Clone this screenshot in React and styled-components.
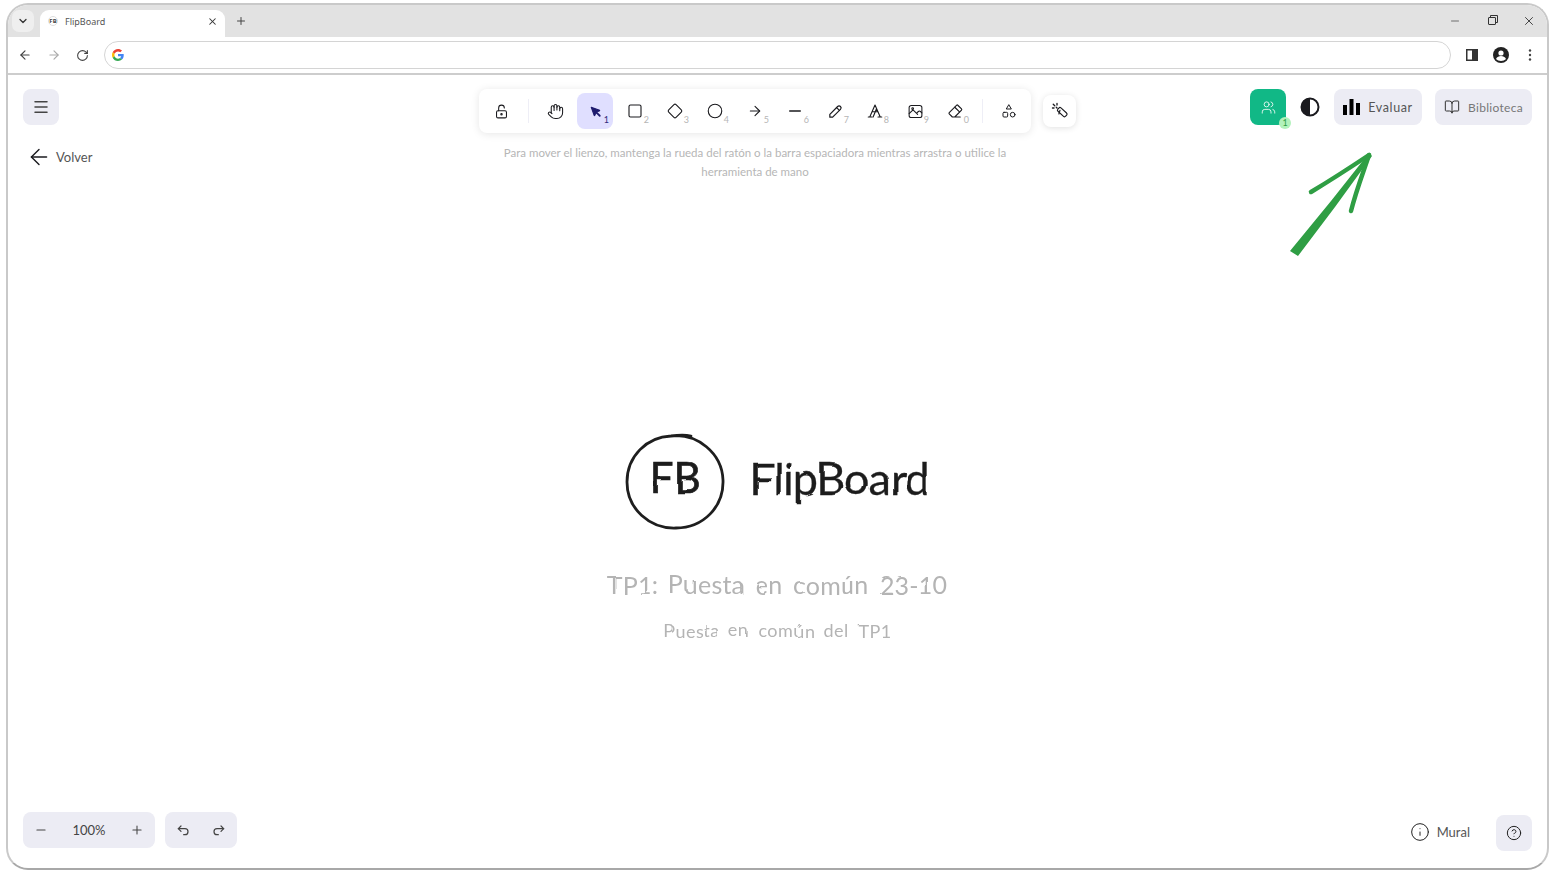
import React from 'react';
import styled, { createGlobalStyle } from 'styled-components';
import {
  ArrowLeft, ArrowRight, BookOpen, ChevronDown, CircleHelp, Hand, Info, Menu,
  Minus, Plus, RotateCw, Users, X,
} from 'lucide-react';

const GlobalStyle = createGlobalStyle`
  html, body {
    margin: 0;
    height: 100%;
    background: #fff;
    overflow: hidden;
  }
  body {
    font-family: "Lato", "Noto Sans", "Liberation Sans", sans-serif;
  }
`;

const Window = styled.div`
  box-sizing: border-box;
  width: 1543px;
  height: 867px;
  margin: 3px 6px 6px 6px;
  border: 2px solid #c9c9c9;
  border-bottom-color: #a8a8a8;
  border-radius: 22px;
  overflow: hidden;
  display: flex;
  flex-direction: column;
  background: #fff;
`;

const TabStrip = styled.div`
  height: 32px;
  flex: none;
  background: #e2e2e2;
  display: flex;
  align-items: flex-end;
  padding-left: 4px;
`;

const TabSearch = styled.div`
  width: 22px;
  height: 22px;
  margin-bottom: 5px;
  border-radius: 7px;
  background: #efefef;
  color: #333;
  display: flex;
  align-items: center;
  justify-content: center;
`;

const Tab = styled.div`
  width: 185px;
  height: 27px;
  margin-left: 6px;
  box-sizing: border-box;
  padding: 0 7px 5px 8px;
  background: #fff;
  border-radius: 9px 9px 0 0;
  display: flex;
  align-items: center;
  gap: 7px;
  font-family: "Noto Sans", sans-serif;
  font-size: 9px;
  color: #555;
`;

const Favicon = styled.span`
  width: 10px;
  height: 10px;
  border: 1px solid #ddd;
  border-radius: 50%;
  box-sizing: border-box;
  font-size: 6px;
  font-weight: 700;
  color: #444;
  display: flex;
  align-items: center;
  justify-content: center;
`;

const TabTitle = styled.span`
  flex: 1;
`;

const NewTab = styled.div`
  margin: 0 0 10px 10px;
  color: #444;
  display: flex;
`;

const WindowControls = styled.div`
  margin-left: auto;
  height: 32px;
  padding: 0 0 1px;
  box-sizing: border-box;
  display: flex;
  align-items: center;
  color: #222;
`;

const WindowControl = styled.span`
  width: 37px;
  display: flex;
  justify-content: center;
`;

const RestoreIcon = styled.span`
  width: 6px;
  height: 6px;
  border: 1px solid #333;
  border-radius: 1px;
  box-shadow: 2px -2px 0 -1px #e2e2e2, 2px -2px 0 0 #333;
`;

const AddressBar = styled.div`
  height: 38px;
  flex: none;
  box-sizing: border-box;
  border-bottom: 2px solid #cdcdcd;
  display: flex;
  align-items: center;
  padding: 0 3px 0 2px;
  color: #444;
`;

const NavIcon = styled.span`
  width: 29px;
  display: flex;
  justify-content: center;
  color: ${(p) => (p.$dim ? '#aaa' : '#444')};
`;

const Omnibox = styled.div`
  flex: 1;
  height: 28px;
  margin: 0 6px 0 7px;
  box-sizing: border-box;
  padding-left: 7px;
  border: 1px solid #d4d4d4;
  border-radius: 14px;
  display: flex;
  align-items: center;
`;

const Canvas = styled.main`
  flex: 1;
  position: relative;
  display: flex;
  flex-direction: column;
  padding: 14px 15px 17px 15px;
  color: #1b1b1f;
`;

const TopBar = styled.div`
  display: grid;
  grid-template-columns: 456px auto 1fr;
  align-items: start;
`;

const LeftColumn = styled.div`
  display: flex;
  flex-direction: column;
  align-items: flex-start;
`;

const IconButton = styled.button`
  width: 36px;
  height: 36px;
  padding: 0;
  border: 0;
  border-radius: 8px;
  background: #ececf4;
  color: #444;
  display: flex;
  align-items: center;
  justify-content: center;
`;

const BackLink = styled.a`
  margin: 19px 0 0 3px;
  display: flex;
  align-items: center;
  gap: 4px;
  font-size: 13px;
  color: #555;
`;

const CenterColumn = styled.div`
  width: 597px;
`;

const ToolRow = styled.div`
  display: flex;
  align-items: center;
  gap: 12px;
`;

const Toolbar = styled.div`
  height: 44px;
  width: 552px;
  box-sizing: border-box;
  padding: 4px;
  display: flex;
  align-items: center;
  gap: 4px;
  background: #fff;
  border-radius: 8px;
  box-shadow: 0 1px 8px rgba(0, 0, 0, 0.1);
`;

const Tool = styled.div`
  position: relative;
  width: 36px;
  height: 36px;
  flex: none;
  border-radius: 8px;
  background: ${(p) => (p.$active ? '#e0dfff' : 'transparent')};
  color: #1b1b1f;
  display: flex;
  align-items: center;
  justify-content: center;
`;

const ToolKey = styled.span`
  position: absolute;
  right: 4px;
  bottom: 4px;
  font-size: 9px;
  line-height: 10px;
  color: ${(p) => (p.$active ? '#2f2a7a' : '#b5b5b5')};
`;

const ToolDivider = styled.div`
  width: 1px;
  height: 24px;
  margin: 0 4px 0 5px;
  background: #eeeef6;
`;

const MagicButton = styled.div`
  width: 33px;
  height: 32px;
  border-radius: 8px;
  background: #fff;
  box-shadow: 0 1px 6px rgba(0, 0, 0, 0.12);
  display: flex;
  align-items: center;
  justify-content: center;
`;

const Hint = styled.p`
  width: 552px;
  margin: 11px 0 0;
  font-size: 11.5px;
  line-height: 18.5px;
  text-align: center;
  color: #b6b6b6;
`;

const RightGroup = styled.div`
  display: flex;
  justify-content: flex-end;
  align-items: center;
`;

const CollabButton = styled.div`
  position: relative;
  width: 36px;
  height: 36px;
  border-radius: 8px;
  background: #11b886;
  color: #fff;
  display: flex;
  align-items: center;
  justify-content: center;
`;

const CollabBadge = styled.span`
  position: absolute;
  right: -5px;
  bottom: -4px;
  width: 12px;
  height: 12px;
  border-radius: 50%;
  background: #b2f2bb;
  color: #2f9e44;
  font-size: 9px;
  line-height: 12px;
  text-align: center;
`;

const ThemeToggle = styled.div`
  margin: 0 14px;
  display: flex;
`;

const LabelButton = styled.div`
  height: 36px;
  width: ${(p) => p.$width}px;
  margin-left: ${(p) => p.$gap || 0}px;
  box-sizing: border-box;
  border-radius: 8px;
  background: #ececf4;
  display: flex;
  align-items: center;
  justify-content: center;
  gap: ${(p) => p.$iconGap}px;
  font-size: ${(p) => p.$size}px;
  letter-spacing: ${(p) => p.$spacing}px;
  color: ${(p) => p.$color};
`;

const BottomBar = styled.div`
  margin-top: auto;
  display: flex;
  align-items: flex-end;
`;

const ControlGroup = styled.div`
  height: 36px;
  width: ${(p) => p.$width}px;
  margin: 0 10px 3px 0;
  border-radius: 8px;
  background: #ececf4;
  display: flex;
  align-items: center;
  justify-content: space-between;
  padding: 0 ${(p) => p.$pad}px;
  box-sizing: border-box;
  color: #444;
  font-size: 13px;
`;

const MuralInfo = styled.div`
  margin: 0 26px 9px auto;
  display: flex;
  align-items: center;
  gap: 7px;
  font-size: 13px;
  color: #555;
`;

// lo dibujado en el mural
const Scene = styled.div`
  position: absolute;
  top: 358px;
  left: 0;
  right: 1px;
  display: flex;
  flex-direction: column;
  align-items: center;
  pointer-events: none;
`;

const LogoRow = styled.div`
  display: flex;
  align-items: center;
  gap: 24px;
`;

const LogoMark = styled.div`
  position: relative;
  width: 100px;
  height: 97px;
`;

const LogoInitials = styled.span`
  position: absolute;
  inset: 0;
  padding-bottom: 10px;
  display: flex;
  align-items: center;
  justify-content: center;
  font-size: 42px;
  -webkit-text-stroke: 0.7px #1e1e1e;
  color: #1e1e1e;
  filter: url(#rough);
`;

const LogoName = styled.span`
  font-size: 45px;
  line-height: 60px;
  margin-bottom: 7px;
  letter-spacing: -1px;
  -webkit-text-stroke: 0.3px #1e1e1e;
  color: #1e1e1e;
  filter: url(#rough);
`;

const SceneTitle = styled.div`
  font-size: ${(p) => p.$size}px;
  line-height: 30px;
  margin-top: ${(p) => p.$top}px;
  letter-spacing: ${(p) => p.$spacing}px;
  word-spacing: 4px;
  color: #b4b4b4;
  filter: url(#rough);
`;

const GreenArrow = styled.svg`
  position: absolute;
  left: 1273px;
  top: 70px;
`;

const line = { fill: 'none', stroke: 'currentColor', strokeLinecap: 'round', strokeLinejoin: 'round' };

const Glyph = ({ size = 16, w = 1.5, children }) => (
  <svg width={size} height={size} viewBox="0 0 24 24" strokeWidth={w} style={line}>{children}</svg>
);

const tools = [
  { key: '1', active: true, icon: (
    <Glyph size={17} w={1.5}>
      <path d="M6 6l4.200 11.800a.4.4 0 0 0 .7 0l2.100-4.800 4.800-2a.4.4 0 0 0 0-.6z" fill="#1e1b6e" stroke="#1e1b6e" />
      <path d="M13.500 13.500l4.500 4.500" stroke="#1e1b6e" strokeWidth={2.500} />
    </Glyph>
  ) },
  { key: '2', icon: <Glyph size={18}><rect x="4" y="4" width="16" height="16" rx="2" /></Glyph> },
  { key: '3', icon: <Glyph size={18}><path d="M10.600 3.600a2 2 0 0 1 2.800 0l7 7a2 2 0 0 1 0 2.800l-7 7a2 2 0 0 1-2.800 0l-7-7a2 2 0 0 1 0-2.800z" /></Glyph> },
  { key: '4', icon: <Glyph size={18}><circle cx="12" cy="12" r="9" /></Glyph> },
  { key: '5', icon: <ArrowRight size={16} strokeWidth={1.600} /> },
  { key: '6', icon: <Glyph size={16}><path d="M4 12h16" strokeWidth={2} /></Glyph> },
  { key: '7', icon: <Glyph size={17} w={1.700}><path d="M4 20h4L19 9a2.800 2.800 0 0 0-4-4L4 16z" /><path d="M13.500 6.500l4 4" /></Glyph> },
  { key: '8', icon: <Glyph size={18}><path d="M3 20h5M16 20h5M5 20L12 4l7 16M8 13h8M9.500 20L14 9" /></Glyph> },
  { key: '9', icon: <Glyph size={17}><rect x="3" y="3.500" width="18" height="17" rx="3" /><circle cx="8" cy="8" r="1.200" /><path d="M3 15l4-4c1-1 2-1 3 0l5 5M14 14l2-2c1-1 2-1 3 0l2 2" /></Glyph> },
  { key: '0', icon: <Glyph size={18}><path d="M19 20H8.500l-4.200-4.300a1 1 0 0 1 0-1.400l10-10a1 1 0 0 1 1.400 0l5 5a1 1 0 0 1 0 1.400l-9 9.300" /><path d="M18 13.300L11.700 7" /></Glyph> },
];

function GoogleIcon() {
  return (
    <svg width="12" height="12" viewBox="0 0 48 48">
      <path fill="#EA4335" d="M24 9.500c3.500 0 6.700 1.200 9.200 3.600l6.900-6.900C35.900 2.400 30.500 0 24 0 14.600 0 6.500 5.400 2.600 13.200l8 6.200C12.400 13.700 17.700 9.500 24 9.500z" />
      <path fill="#4285F4" d="M46.900 24.500c0-1.600-.2-3.100-.4-4.500H24v9h12.900c-.6 3-2.200 5.500-4.700 7.200l7.700 6c4.500-4.200 7-10.300 7-17.700z" />
      <path fill="#FBBC05" d="M10.500 28.600c-.5-1.400-.8-3-.8-4.600s.3-3.200.8-4.600l-8-6.200C.9 16.500 0 20.100 0 24s.9 7.500 2.600 10.800z" />
      <path fill="#34A853" d="M24 48c6.500 0 11.900-2.100 15.900-5.800l-7.700-6c-2.200 1.500-4.900 2.300-8.200 2.300-6.300 0-11.600-4.200-13.500-9.900l-8 6.200C6.500 42.600 14.600 48 24 48z" />
    </svg>
  );
}

function BrowserChrome() {
  return (
    <>
      <TabStrip>
        <TabSearch><ChevronDown size={12} strokeWidth={2.500} /></TabSearch>
        <Tab>
          <Favicon>FB</Favicon>
          <TabTitle>FlipBoard</TabTitle>
          <X size={11} strokeWidth={2.200} color="#333" />
        </Tab>
        <NewTab><Plus size={12} strokeWidth={2} /></NewTab>
        <WindowControls>
          <WindowControl><Minus size={12} strokeWidth={1.200} /></WindowControl>
          <WindowControl><RestoreIcon /></WindowControl>
          <WindowControl><X size={14} strokeWidth={1.400} /></WindowControl>
        </WindowControls>
      </TabStrip>
      <AddressBar>
        <NavIcon><ArrowLeft size={14} strokeWidth={2} /></NavIcon>
        <NavIcon $dim><ArrowRight size={14} strokeWidth={2} /></NavIcon>
        <NavIcon><RotateCw size={13} strokeWidth={2} /></NavIcon>
        <Omnibox><GoogleIcon /></Omnibox>
        <NavIcon>
          <svg width="12" height="12" viewBox="0 0 12 12">
            <rect x="0.750" y="0.750" width="10.500" height="10.500" fill="none" stroke="#333" strokeWidth="1.500" />
            <rect x="6" y="1" width="5" height="10" fill="#333" />
          </svg>
        </NavIcon>
        <NavIcon>
          <svg width="16" height="16" viewBox="0 0 16 16">
            <circle cx="8" cy="8" r="8" fill="#222" />
            <circle cx="8" cy="6" r="2.600" fill="#fff" />
            <path d="M3 12c1-2.200 3-3 5-3s4 .8 5 3c-1.200 1.300-3 2-5 2s-3.800-.7-5-2z" fill="#fff" />
          </svg>
        </NavIcon>
        <NavIcon>
          <svg width="4" height="12" viewBox="0 0 4 12">
            <circle cx="2" cy="1.500" r="1.200" fill="#444" />
            <circle cx="2" cy="6" r="1.200" fill="#444" />
            <circle cx="2" cy="10.500" r="1.200" fill="#444" />
          </svg>
        </NavIcon>
      </AddressBar>
    </>
  );
}

function MainToolbar() {
  return (
    <Toolbar>
      <Tool>
        <Glyph size={17}>
          <rect x="5" y="11" width="14" height="10" rx="2" />
          <circle cx="12" cy="16" r="1" />
          <path d="M8 11V7a4 4 0 0 1 8 0" />
        </Glyph>
      </Tool>
      <ToolDivider />
      <Tool><Hand size={17} strokeWidth={1.500} /></Tool>
      {tools.map((t) => (
        <Tool key={t.key} $active={t.active}>
          {t.icon}
          <ToolKey $active={t.active}>{t.key}</ToolKey>
        </Tool>
      ))}
      <ToolDivider />
      <Tool>
        <Glyph size={16}>
          <path d="M12 3l3.500 6h-7z" />
          <rect x="3" y="14" width="7" height="7" rx="1.500" />
          <circle cx="17.500" cy="17.500" r="3.500" />
        </Glyph>
      </Tool>
    </Toolbar>
  );
}

function Drawing() {
  return (
    <>
      <svg width="0" height="0" style={{ position: 'absolute' }}>
        <filter id="rough">
          <feTurbulence type="fractalNoise" baseFrequency="0.03" numOctaves="1" seed="4" />
          <feDisplacementMap in="SourceGraphic" scale="4" />
        </filter>
      </svg>
      <GreenArrow width="100" height="120" viewBox="0 0 100 120">
        <path d="M9 106L50 56 88 8 91 11 54 62 17 111z" fill="#2f9e44" />
        <g fill="none" stroke="#2f9e44" strokeLinecap="round" strokeLinejoin="round" strokeWidth="4.500">
          <path d="M30 47C50 35 70 22 88 10" />
          <path d="M70 66C75 46 82 28 88 10" />
        </g>
      </GreenArrow>
      <Scene>
        <LogoRow>
          <LogoMark>
            <svg width="100" height="97" viewBox="0 0 100 97">
              <path d="M46 3C72 0 97 20 98 47c1 27-20 48-47 48C25 96 2 76 2 49 2 23 22 4 46 3c8-1 15-1 20 0" fill="none" stroke="#1e1e1e" strokeWidth="2.800" strokeLinecap="round" />
            </svg>
            <LogoInitials>FB</LogoInitials>
          </LogoMark>
          <LogoName>FlipBoard</LogoName>
        </LogoRow>
        <SceneTitle $size={25} $top={39} $spacing={0.200}>TP1: Puesta en común 23-10</SceneTitle>
        <SceneTitle $size={18} $top={16} $spacing={0.500}>Puesta en común del TP1</SceneTitle>
      </Scene>
    </>
  );
}

export default function App() {
  return (
    <>
      <GlobalStyle />
      <Window>
        <BrowserChrome />
        <Canvas>
          <Drawing />
          <TopBar>
            <LeftColumn>
              <IconButton><Menu size={18} strokeWidth={2} /></IconButton>
              <BackLink><ArrowLeft size={26} strokeWidth={1.300} color="#1b1b1f" />Volver</BackLink>
            </LeftColumn>
            <CenterColumn>
              <ToolRow>
                <MainToolbar />
                <MagicButton>
                  <Glyph size={18}>
                    <rect x="8" y="10.500" width="14" height="6" rx="2" transform="rotate(42 15 13.500)" />
                    <path d="M12 11l-1.500 5" />
                    <path d="M3 3l2 2M8 2v2M2 8h2M7 7l1 1" strokeWidth={1.800} />
                  </Glyph>
                </MagicButton>
              </ToolRow>
              <Hint>
                Para mover el lienzo, mantenga la rueda del ratón o la barra espaciadora mientras arrastra o utilice la herramienta de mano
              </Hint>
            </CenterColumn>
            <RightGroup>
              <CollabButton>
                <Users size={15} strokeWidth={1.300} />
                <CollabBadge>1</CollabBadge>
              </CollabButton>
              <ThemeToggle>
                <svg width="20" height="20" viewBox="0 0 20 20">
                  <circle cx="10" cy="10" r="8.500" fill="#fff" stroke="#1b1b1f" strokeWidth="2" />
                  <path d="M10 1.500a8.500 8.500 0 0 0 0 17z" fill="#1b1b1f" />
                </svg>
              </ThemeToggle>
              <LabelButton $width={88} $iconGap={8} $color="#555" $size={12.500} $spacing={0.600}>
                <svg width="17" height="16" viewBox="0 0 17 16">
                  <rect x="0" y="6" width="4" height="10" fill="#000" />
                  <rect x="6.500" y="0" width="4" height="16" fill="#000" />
                  <rect x="13" y="4" width="4" height="12" fill="#000" />
                </svg>
                Evaluar
              </LabelButton>
              <LabelButton $width={97} $gap={13} $iconGap={8} $color="#777" $size={12} $spacing={0.300}>
                <BookOpen size={16} strokeWidth={1.500} color="#333" />
                Biblioteca
              </LabelButton>
            </RightGroup>
          </TopBar>
          <BottomBar>
            <ControlGroup $width={132} $pad={11}>
              <Minus size={14} strokeWidth={1.800} />
              <span>100%</span>
              <Plus size={14} strokeWidth={1.800} />
            </ControlGroup>
            <ControlGroup $width={72} $pad={10}>
              <Glyph size={16} w={1.800}><path d="M9 14L5 10l4-4" /><path d="M5 10h10a4 4 0 0 1 0 9h-2" /></Glyph>
              <Glyph size={16} w={1.800}><path d="M15 14l4-4-4-4" /><path d="M19 10H9a4 4 0 0 0 0 9h2" /></Glyph>
            </ControlGroup>
            <MuralInfo><Info size={20} strokeWidth={1.200} color="#222" />Mural</MuralInfo>
            <IconButton><CircleHelp size={16} strokeWidth={1.500} color="#222" /></IconButton>
          </BottomBar>
        </Canvas>
      </Window>
    </>
  );
}
